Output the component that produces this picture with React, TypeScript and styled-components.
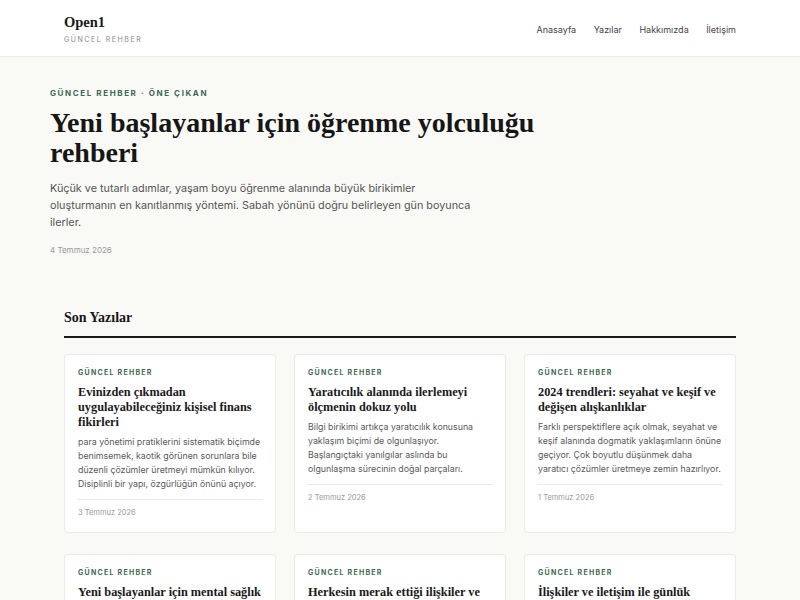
import React from "react";
import styled, { createGlobalStyle } from "styled-components";

const GlobalStyle = createGlobalStyle`
  * { box-sizing: border-box; }
  html, body { margin: 0; padding: 0; }
  body {
    background: #f9f9f6;
    font-family: Inter, "Noto Sans", sans-serif;
    color: #222;
  }
`;

const SERIF = `"Liberation Serif", "Times New Roman", serif`;

const Header = styled.header`
  background: #ffffff;
  border-bottom: 1px solid #ecece8;
`;

const HeaderInner = styled.div`
  max-width: 672px;
  margin: 0 auto;
  height: 56px;
  display: flex;
  align-items: center;
  justify-content: space-between;
`;

const Brand = styled.div`
  display: flex;
  flex-direction: column;
  gap: 7px;
  padding-top: 2px;
`;

const Logo = styled.div`
  font-family: ${SERIF};
  font-weight: 700;
  font-size: 14.5px;
  color: #1a1a1a;
  line-height: 1;
`;

const Tagline = styled.div`
  font-size: 7px;
  letter-spacing: 0.22em;
  color: #8a8a8a;
  line-height: 1;
`;

const Nav = styled.nav`
  display: flex;
  gap: 17.5px;
  padding-top: 2px;
`;

const NavLink = styled.a`
  font-size: 9px;
  color: #444;
  text-decoration: none;
`;

const Hero = styled.section`
  max-width: 700px;
  margin: 0 auto;
  padding: 32px 0 56px;
`;

const Kicker = styled.div<{ $size?: number; $spacing?: number }>`
  font-size: ${(p) => p.$size ?? 7}px;
  font-weight: 700;
  letter-spacing: ${(p) => p.$spacing ?? 0.18}em;
  color: #3b6b52;
  line-height: 8px;
  text-transform: uppercase;
`;

const HeroTitle = styled.h1`
  font-family: ${SERIF};
  font-weight: 700;
  font-size: 28px;
  line-height: 30px;
  color: #161616;
  margin: 11px 0 0;
  max-width: 540px;
`;

const HeroText = styled.p`
  font-size: 10.8px;
  line-height: 17px;
  color: #555;
  margin: 12px 0 0;
  max-width: 434px;
`;

const DateText = styled.div<{ $size?: number }>`
  font-size: ${(p) => p.$size ?? 7.5}px;
  color: #9a9a9a;
  line-height: 8px;
`;

const HeroDate = styled(DateText)`
  margin-top: 15px;
`;

const Section = styled.section`
  max-width: 672px;
  margin: 0 auto;
`;

const SectionHead = styled.h2`
  font-family: ${SERIF};
  font-weight: 700;
  font-size: 14px;
  line-height: 16px;
  color: #161616;
  margin: 0;
  padding-bottom: 10px;
  border-bottom: 2px solid #1a1a1a;
`;

const Grid = styled.div`
  display: grid;
  grid-template-columns: repeat(3, 1fr);
  column-gap: 18px;
  row-gap: 21px;
  margin-top: 16px;
`;

const Card = styled.article`
  background: #fff;
  border: 1px solid #ebebe7;
  border-radius: 4px;
  padding: 14px 13px 15px;
  display: flex;
  flex-direction: column;
`;

const CardTitle = styled.h3`
  font-family: ${SERIF};
  font-weight: 700;
  font-size: 12.3px;
  line-height: 15px;
  color: #1a1a1a;
  margin: 8px 0 0;
`;

const CardText = styled.p`
  font-size: 8.8px;
  line-height: 14px;
  color: #5a5a5a;
  margin: 5px 0 0;
`;

const Divider = styled.hr`
  border: 0;
  border-top: 1px solid #ececea;
  margin: 8px -1px 0;
`;

const CardDate = styled(DateText)`
  margin-top: 9px;
`;

const posts = [
  {
    title: "Evinizden çıkmadan uygulayabileceğiniz kişisel finans fikirleri",
    text: "para yönetimi pratiklerini sistematik biçimde benimsemek, kaotik görünen sorunlara bile düzenli çözümler üretmeyi mümkün kılıyor. Disiplinli bir yapı, özgürlüğün önünü açıyor.",
    date: "3 Temmuz 2026",
  },
  {
    title: "Yaratıcılık alanında ilerlemeyi ölçmenin dokuz yolu",
    text: "Bilgi birikimi artıkça yaratıcılık konusuna yaklaşım biçimi de olgunlaşıyor. Başlangıçtaki yanılgılar aslında bu olgunlaşma sürecinin doğal parçaları.",
    date: "2 Temmuz 2026",
  },
  {
    title: "2024 trendleri: seyahat ve keşif ve değişen alışkanlıklar",
    text: "Farklı perspektiflere açık olmak, seyahat ve keşif alanında dogmatik yaklaşımların önüne geçiyor. Çok boyutlu düşünmek daha yaratıcı çözümler üretmeye zemin hazırlıyor.",
    date: "1 Temmuz 2026",
  },
  {
    title: "Yeni başlayanlar için mental sağlık rehberi ve ilk adımlar",
    text: "Küçük ve tutarlı adımlar, mental sağlık alanında büyük birikimler oluşturmanın en kanıtlanmış yöntemi.",
    date: "30 Haziran 2026",
  },
  {
    title: "Herkesin merak ettiği ilişkiler ve iletişim soruları",
    text: "İlişkiler ve iletişim konusunda sık sorulan soruları ve yanıtlarını bir araya getirdik.",
    date: "29 Haziran 2026",
  },
  {
    title: "İlişkiler ve iletişim ile günlük hayatı kolaylaştırmak",
    text: "Günlük alışkanlıklarda yapılan küçük değişiklikler, ilişkilerde büyük farklar yaratabiliyor.",
    date: "28 Haziran 2026",
  },
];

export default function App() {
  return (
    <>
      <GlobalStyle />
      <Header>
        <HeaderInner>
          <Brand>
            <Logo>Open1</Logo>
            <Tagline>GÜNCEL REHBER</Tagline>
          </Brand>
          <Nav>
            <NavLink href="#">Anasayfa</NavLink>
            <NavLink href="#">Yazılar</NavLink>
            <NavLink href="#">Hakkımızda</NavLink>
            <NavLink href="#">İletişim</NavLink>
          </Nav>
        </HeaderInner>
      </Header>
      <Hero>
        <Kicker $size={8} $spacing={0.2}>Güncel Rehber · Öne Çıkan</Kicker>
        <HeroTitle>Yeni başlayanlar için öğrenme yolculuğu rehberi</HeroTitle>
        <HeroText>
          Küçük ve tutarlı adımlar, yaşam boyu öğrenme alanında büyük birikimler
          oluşturmanın en kanıtlanmış yöntemi. Sabah yönünü doğru belirleyen gün
          boyunca ilerler.
        </HeroText>
        <HeroDate $size={8}>4 Temmuz 2026</HeroDate>
      </Hero>
      <Section>
        <SectionHead>Son Yazılar</SectionHead>
        <Grid>
          {posts.map((p) => (
            <Card key={p.title}>
              <Kicker>GÜNCEL REHBER</Kicker>
              <CardTitle>{p.title}</CardTitle>
              <CardText>{p.text}</CardText>
              <Divider />
              <CardDate>{p.date}</CardDate>
            </Card>
          ))}
        </Grid>
      </Section>
    </>
  );
}
